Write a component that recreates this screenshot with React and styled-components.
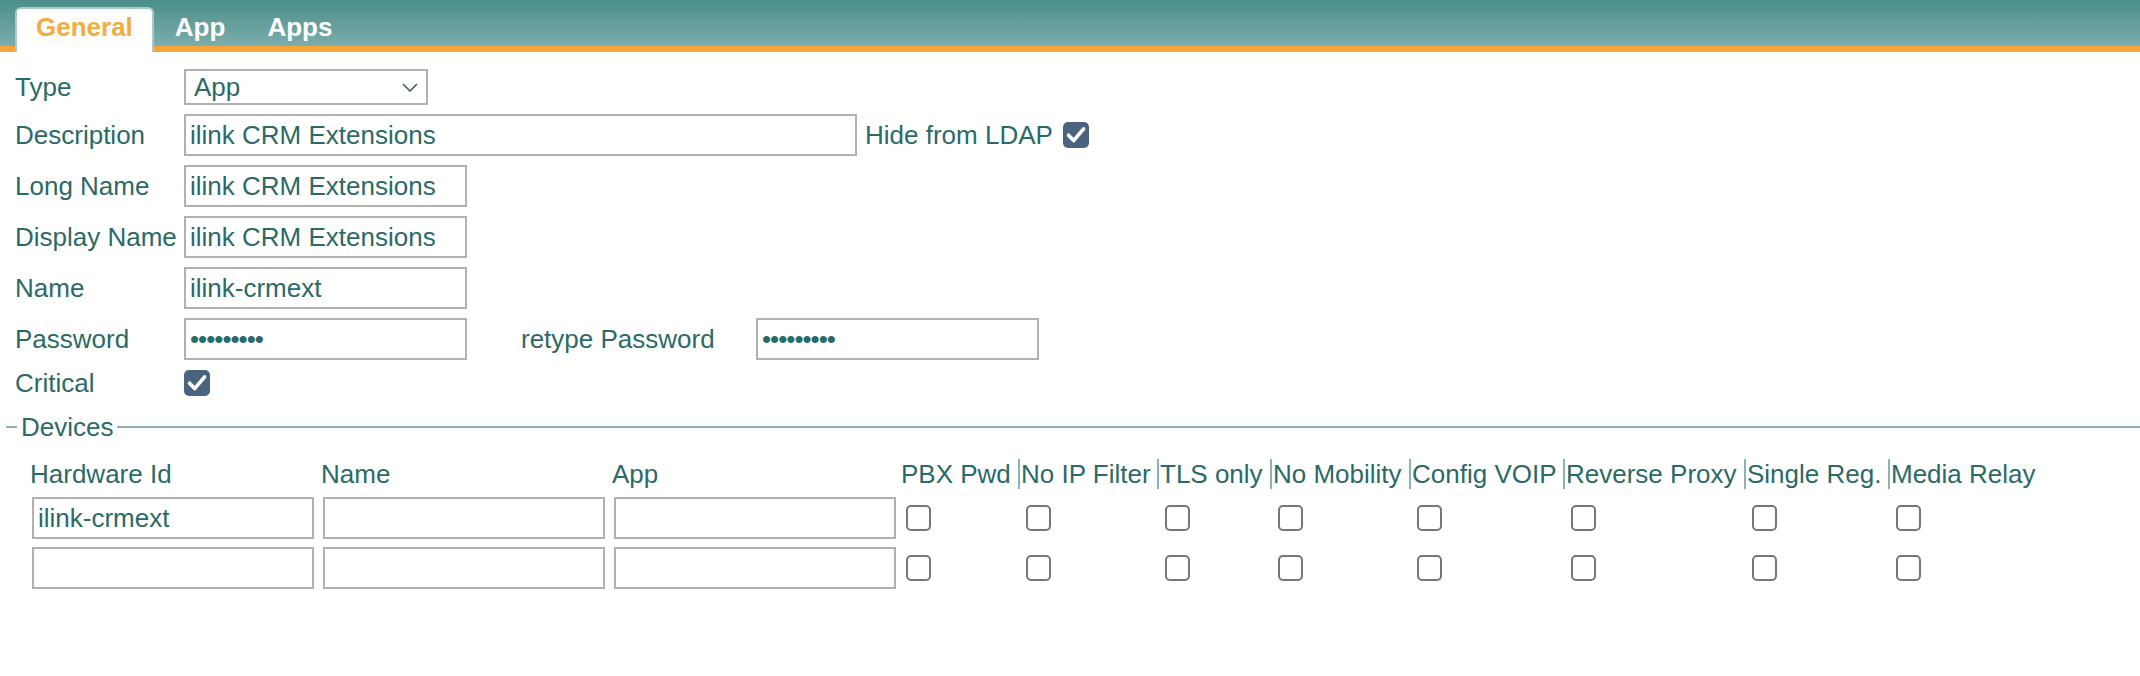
import React from "react";
import styled, { createGlobalStyle } from "styled-components";

const GlobalStyle = createGlobalStyle`
  html, body {
    margin: 0;
    padding: 0;
    background: #fff;
  }
  body {
    font-family: "Liberation Sans", Arial, Helvetica, sans-serif;
    font-size: 26px;
    color: #2b6a66;
  }
  * {
    box-sizing: border-box;
  }
`;

const Page = styled.div`
  width: 2140px;
`;

/* tab strip */
const TabBar = styled.div`
  display: flex;
  align-items: flex-end;
  box-sizing: content-box;
  height: 46px;
  padding-left: 15px;
  background: linear-gradient(#4a8f8a, #7cadac);
  border-bottom: 6px solid #f4a43b;
`;

const Tab = styled.div`
  height: 45px;
  margin-bottom: -6px;
  padding: 3px 19px 0;
  border: 2px solid ${(p) => (p.$active ? "#a8c9c6" : "transparent")};
  border-bottom: none;
  border-radius: 6px 6px 0 0;
  background: ${(p) => (p.$active ? "#fff" : "transparent")};
  color: ${(p) => (p.$active ? "#f2ad40" : "#fff")};
  font-weight: 700;
  line-height: 30px;
  cursor: pointer;
`;

/* general form */
const Form = styled.div`
  display: flex;
  flex-direction: column;
  gap: 9px;
  padding-top: 17px;
`;

const Row = styled.div`
  display: flex;
  align-items: center;
  height: ${(p) => p.$h || 42}px;
`;

const Label = styled.div`
  flex-shrink: 0;
  width: ${(p) => p.$w || 184}px;
  margin-left: ${(p) => p.$ml || 0}px;
  padding-left: ${(p) => (p.$ml ? 0 : 15)}px;
  line-height: 30px;
  white-space: nowrap;
`;

const InlineText = styled.span`
  margin-left: 8px;
  line-height: 30px;
  white-space: nowrap;
`;

const TextInput = styled.input`
  flex-shrink: 0;
  width: ${(p) => p.$w || 283}px;
  height: 42px;
  margin: 0 0 0 ${(p) => p.$ml || 0}px;
  padding: 0 4px;
  border: 2px solid #b1b1b1;
  border-radius: 0;
  background: #fff;
  font: inherit;
  color: inherit;
  letter-spacing: ${(p) => (p.type === "password" ? "-1px" : "normal")};
  outline: none;
`;

const SelectWrap = styled.div`
  position: relative;
  width: 244px;
  height: 36px;
`;

const Select = styled.select`
  appearance: none;
  width: 100%;
  height: 100%;
  padding: 0 0 0 8px;
  border: 2px solid #b1b1b1;
  border-radius: 0;
  background: #fff;
  font: inherit;
  color: inherit;
  outline: none;
`;

const Chevron = styled.svg`
  position: absolute;
  right: 10px;
  top: 14px;
  pointer-events: none;
`;

const Box = styled.span`
  display: inline-flex;
  align-items: center;
  justify-content: center;
  flex-shrink: 0;
  width: ${(p) => (p.$checked ? 26 : 25)}px;
  height: 26px;
  margin-left: ${(p) => p.$ml || 0}px;
  border-radius: 5px;
  border: ${(p) => (p.$checked ? "none" : "2px solid #767676")};
  background: ${(p) => (p.$checked ? "#4a6480" : "#fff")};
`;

const Checkbox = ({ checked, ml }) => (
  <Box $checked={checked} $ml={ml}>
    {checked && (
      <svg width="26" height="26" viewBox="0 0 26 26">
        <path
          d="M5.5 13.2 L10.6 18.6 L20.6 6.8"
          fill="none"
          stroke="#fff"
          strokeWidth="3.6"
          strokeLinecap="round"
          strokeLinejoin="round"
        />
      </svg>
    )}
  </Box>
);

/* devices */
const Section = styled.div`
  margin-top: 15px;
`;

const SectionTitle = styled.div`
  display: flex;
  align-items: center;
  height: 30px;
  margin-left: 6px;
  line-height: 30px;
  &::before {
    content: "";
    width: 11px;
    margin-right: 4px;
    border-top: 2px solid #8cb3b3;
  }
  &::after {
    content: "";
    flex: 1;
    margin-left: 4px;
    border-top: 2px solid #8cb3b3;
  }
`;

const DeviceGrid = styled.div`
  display: grid;
  grid-template-columns: 291px 291px 290px 120px 139px 113px 139px 154px 181px 144px 152px;
  row-gap: 8px;
  margin: 17px 0 0 26px;
`;

const HeadCell = styled.div`
  height: 30px;
  line-height: 30px;
  white-space: nowrap;
  padding-left: ${(p) => (p.$check ? 1 : 4)}px;
  border-left: ${(p) =>
    p.$check ? `2px solid ${p.$sep ? "#8cb3b3" : "transparent"}` : "none"};
`;

const Cell = styled.div`
  display: flex;
  align-items: center;
  height: 42px;
  padding-left: ${(p) => (p.$check ? 3 : 4)}px;
`;

const textCols = ["Hardware Id", "Name", "App"];
const checkCols = [
  "PBX Pwd",
  "No IP Filter",
  "TLS only",
  "No Mobility",
  "Config VOIP",
  "Reverse Proxy",
  "Single Reg.",
  "Media Relay",
];
const devices = [
  ["ilink-crmext", "", ""],
  ["", "", ""],
];

export default function App() {
  return (
    <Page>
      <GlobalStyle />
      <TabBar>
        <Tab $active>General</Tab>
        <Tab>App</Tab>
        <Tab>Apps</Tab>
      </TabBar>

      <Form>
        <Row $h={36}>
          <Label>Type</Label>
          <SelectWrap>
            <Select defaultValue="App">
              <option>App</option>
            </Select>
            <Chevron width="16" height="9" viewBox="0 0 16 9">
              <polyline
                points="1,1 8,8 15,1"
                fill="none"
                stroke="#3c5f5d"
                strokeWidth="1.6"
              />
            </Chevron>
          </SelectWrap>
        </Row>
        <Row>
          <Label>Description</Label>
          <TextInput $w={673} defaultValue="ilink CRM Extensions" />
          <InlineText>Hide from LDAP</InlineText>
          <Checkbox checked ml={10} />
        </Row>
        <Row>
          <Label>Long Name</Label>
          <TextInput defaultValue="ilink CRM Extensions" />
        </Row>
        <Row>
          <Label>Display Name</Label>
          <TextInput defaultValue="ilink CRM Extensions" />
        </Row>
        <Row>
          <Label>Name</Label>
          <TextInput defaultValue="ilink-crmext" />
        </Row>
        <Row>
          <Label>Password</Label>
          <TextInput type="password" defaultValue="123456789" />
          <Label $ml={54} $w={235}>
            retype Password
          </Label>
          <TextInput type="password" defaultValue="123456789" />
        </Row>
        <Row $h={28}>
          <Label>Critical</Label>
          <Checkbox checked />
        </Row>
      </Form>

      <Section>
        <SectionTitle>Devices</SectionTitle>
        <DeviceGrid>
          {textCols.map((c) => (
            <HeadCell key={c}>{c}</HeadCell>
          ))}
          {checkCols.map((c, i) => (
            <HeadCell key={c} $check $sep={i > 0}>
              {c}
            </HeadCell>
          ))}
          {devices.map((d, r) => (
            <React.Fragment key={r}>
              {d.map((v, i) => (
                <Cell key={i}>
                  <TextInput $w={282} $ml={2} defaultValue={v} />
                </Cell>
              ))}
              {checkCols.map((c) => (
                <Cell key={c} $check>
                  <Checkbox ml={5} />
                </Cell>
              ))}
            </React.Fragment>
          ))}
        </DeviceGrid>
      </Section>
    </Page>
  );
}
